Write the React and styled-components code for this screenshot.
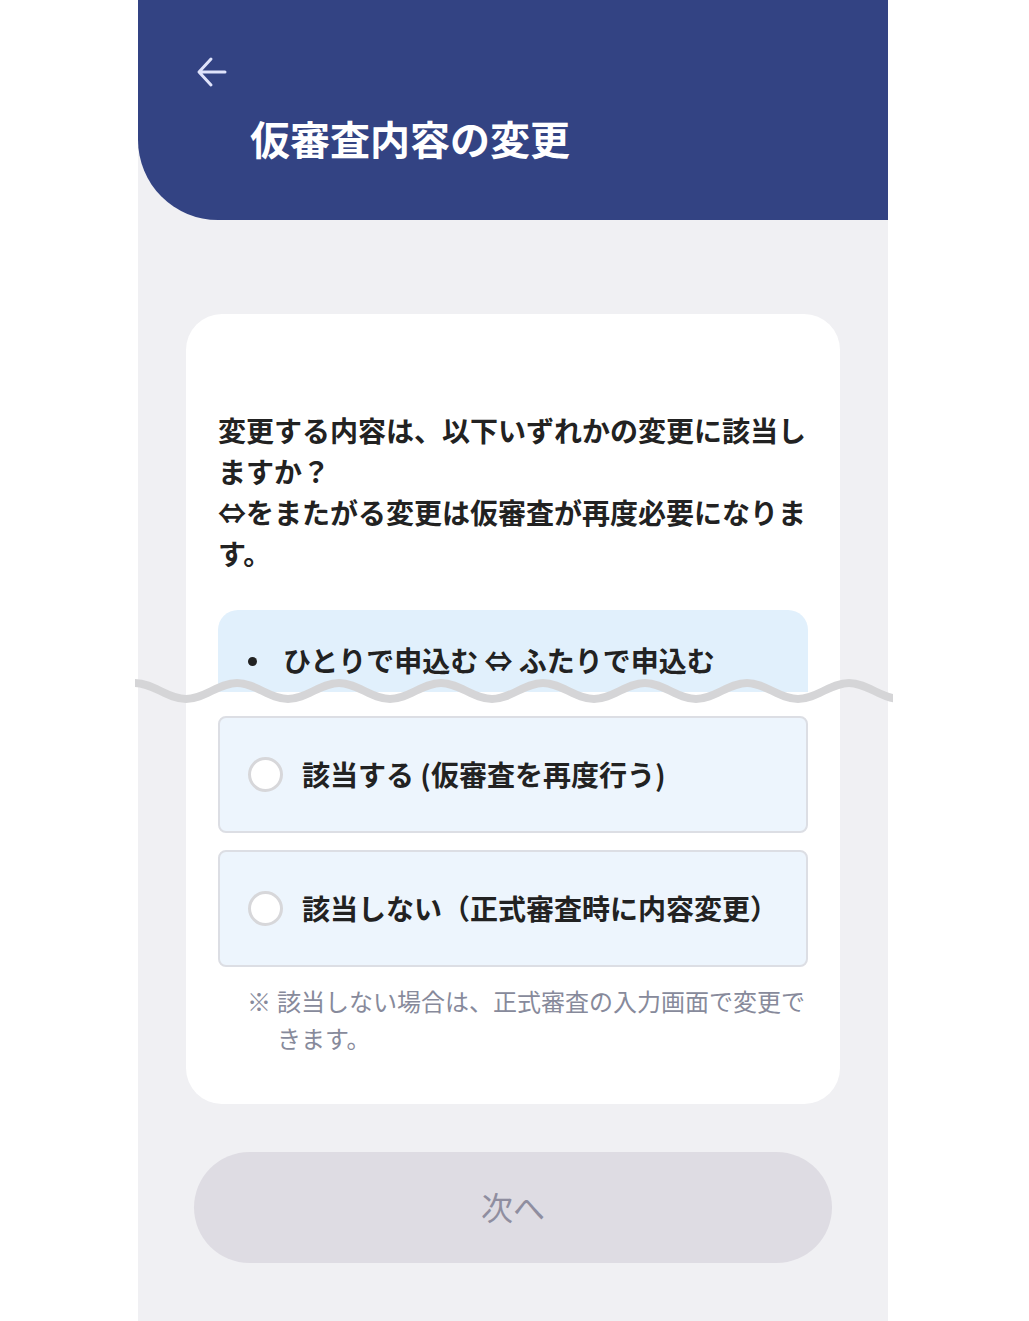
import React from "react";
import styled, { createGlobalStyle } from "styled-components";

const GlobalStyle = createGlobalStyle`
  html, body {
    margin: 0;
    padding: 0;
    background: #ffffff;
  }
  body {
    font-family: "Noto Sans CJK JP", "Noto Sans", sans-serif;
    color: #222222;
  }
  * {
    box-sizing: border-box;
  }
`;

const Screen = styled.div`
  width: 750px;
  min-height: 1321px;
  margin-left: 138px;
  background: #f0f0f3;
  display: flex;
  flex-direction: column;
`;

const Header = styled.header`
  height: 220px;
  background: #334383;
  border-bottom-left-radius: 80px;
  padding: 52px 0 0 54px;
  display: flex;
  flex-direction: column;
`;

const BackButton = styled.button`
  width: 40px;
  height: 40px;
  padding: 0;
  border: none;
  background: transparent;
  display: flex;
  align-items: center;
  justify-content: center;
  cursor: pointer;
`;

const Title = styled.h1`
  margin: 26px 0 0 58px;
  font-size: 40px;
  line-height: 40px;
  font-weight: 700;
  color: #ffffff;
  letter-spacing: 0;
`;

const Card = styled.section`
  margin: 94px 48px 0;
  background: #ffffff;
  border-radius: 36px;
  padding: 96px 32px 48px;
  display: flex;
  flex-direction: column;
`;

const Lead = styled.p`
  margin: 0;
  font-size: 28px;
  line-height: 41px;
  font-weight: 700;
  color: #222222;
`;

const BulletBox = styled.ul`
  position: relative;
  margin: 36px 0 0;
  padding: 30px 0 11px 65px;
  list-style: none;
  background: #e1f0fc;
  border-radius: 20px 20px 0 0;
`;

const BulletItem = styled.li`
  position: relative;
  font-size: 28px;
  line-height: 41px;
  font-weight: 700;
  color: #222222;

  &::before {
    content: "";
    position: absolute;
    left: -35px;
    top: 17px;
    width: 9px;
    height: 9px;
    border-radius: 50%;
    background: #222222;
  }
`;

const Cut = styled.svg`
  position: absolute;
  left: -83px;
  top: 66px;
  display: block;
`;

const Options = styled.div`
  margin-top: 24px;
  display: flex;
  flex-direction: column;
  gap: 17px;
`;

const Option = styled.label`
  height: 117px;
  padding: 0 28px;
  background: #edf5fd;
  border: 2px solid #dcdee4;
  border-radius: 8px;
  display: flex;
  align-items: center;
  gap: 19px;
  cursor: pointer;
`;

const Radio = styled.span`
  width: 35px;
  height: 35px;
  flex: none;
  border-radius: 50%;
  background: #ffffff;
  border: 3px solid #d7d7da;
`;

const OptionText = styled.span`
  font-size: 28px;
  line-height: 41px;
  font-weight: 700;
  color: #222222;
`;

const Note = styled.p`
  margin: 15px 0 0 29px;
  display: flex;
  font-size: 24px;
  line-height: 37px;
  color: #878a9b;
`;

const NoteMark = styled.span`
  width: 30px;
  flex: none;
`;

const NextButton = styled.button`
  margin: 48px 56px 0;
  height: 111px;
  padding-bottom: 4px;
  border: none;
  border-radius: 56px;
  background: #dedce3;
  color: #8f8ea0;
  font-family: "Noto Sans CJK JP", "Noto Sans", sans-serif;
  font-size: 32px;
  font-weight: 400;
  cursor: not-allowed;
`;

const ArrowLeft = () => (
  <svg width="32" height="32" viewBox="0 0 32 32" fill="none">
    <path
      d="M29 16H4M15 3L3 16l12 13"
      stroke="#dfe3fb"
      strokeWidth="3"
      strokeLinecap="round"
      strokeLinejoin="round"
    />
  </svg>
);

const waveWidth = 758;
const period = 102;

// sine-like wave made of cubic halves, crest at x = 0
function wavePath() {
  const half = period / 2;
  const k = half * 0.36;
  const top = 7;
  const bottom = 23;
  let d = `M0 ${top} C${k} ${top} ${half - k} ${bottom} ${half} ${bottom}`;
  let x = half;
  let low = true;
  while (x < waveWidth) {
    const nx = x + half;
    const y = low ? top : bottom;
    d += ` S${nx - k} ${y} ${nx} ${y}`;
    x = nx;
    low = !low;
  }
  return d;
}

export default function App() {
  return (
    <>
      <GlobalStyle />
      <Screen>
        <Header>
          <BackButton aria-label="戻る">
            <ArrowLeft />
          </BackButton>
          <Title>仮審査内容の変更</Title>
        </Header>

        <Card>
          <Lead>
            変更する内容は、以下いずれかの変更に該当しますか？
            <br />
            ⇔をまたがる変更は仮審査が再度必要になります。
          </Lead>

          <BulletBox>
            <BulletItem>ひとりで申込む ⇔ ふたりで申込む</BulletItem>
            <Cut width={waveWidth} height="30" viewBox={`0 0 ${waveWidth} 30`}>
              <path d={wavePath()} fill="none" stroke="#d5d5d7" strokeWidth="8" />
            </Cut>
          </BulletBox>

          <Options>
            <Option>
              <Radio />
              <OptionText>該当する (仮審査を再度行う)</OptionText>
            </Option>
            <Option>
              <Radio />
              <OptionText>該当しない（正式審査時に内容変更）</OptionText>
            </Option>
          </Options>

          <Note>
            <NoteMark>※</NoteMark>
            <span>該当しない場合は、正式審査の入力画面で変更できます。</span>
          </Note>
        </Card>

        <NextButton disabled>次へ</NextButton>
      </Screen>
    </>
  );
}
